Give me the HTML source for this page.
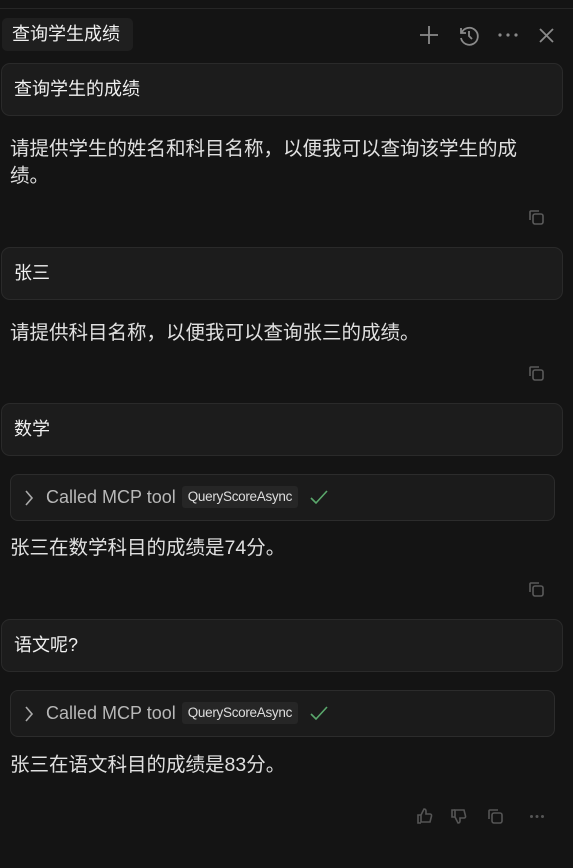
<!DOCTYPE html>
<html><head><meta charset="utf-8"><style>
body{margin:0;width:573px;height:868px;background:#141414;font-family:"Liberation Sans","Noto Sans CJK SC",sans-serif;color:#e6e6e6;position:relative;overflow:hidden}
.a{position:absolute}
.top{left:0;top:8px;width:573px;height:1px;background:#262626}
.tab{left:2px;top:18px;width:131px;height:33px;background:#1f1f1f;border-radius:5px;font-size:18px;line-height:33px;padding-left:10px;box-sizing:border-box;color:#f0f0f0;white-space:nowrap}
.ub{left:1px;width:562px;height:53px;background:#1c1c1c;border:1px solid #2a2a2a;border-radius:9px;box-sizing:border-box;font-size:18px;line-height:51px;padding-left:12px;color:#f0f0f0}
.t{left:10px;font-size:19.5px;line-height:27px;color:#e0e0e0;white-space:nowrap}
.tool{left:10px;width:545px;height:47px;background:#1b1b1b;border:1px solid #2c2c2c;border-radius:8px;box-sizing:border-box;font-size:18px;color:#b8b8b8;line-height:45px;padding-left:35px;white-space:nowrap}
.tool .code{display:inline-block;background:#262626;color:#ddd;font-size:13.5px;letter-spacing:-0.3px;line-height:22px;padding:0 6px;border-radius:3px;vertical-align:middle;margin-left:6px;margin-top:-3px}
svg{position:absolute}
</style></head><body>
<div class="a top"></div>
<div class="a tab">查询学生成绩</div>
<svg style="left:418px;top:24px" width="22" height="22" viewBox="0 0 22 22"><path d="M11 2v18M2 11h18" stroke="#8a8a8a" stroke-width="1.8"/></svg>
<svg style="left:457px;top:24px" width="24" height="24" viewBox="0 0 24 24" fill="none" stroke="#8a8a8a" stroke-width="1.8"><path d="M4 4v5h5"/><path d="M4.5 9A8.5 8.5 0 1 1 4 14"/><path d="M12 7v5l3 3"/></svg>
<svg style="left:497px;top:32px" width="22" height="6"><circle cx="3" cy="3" r="1.6" fill="#8a8a8a"/><circle cx="11" cy="3" r="1.6" fill="#8a8a8a"/><circle cx="19" cy="3" r="1.6" fill="#8a8a8a"/></svg>
<svg style="left:539px;top:28px" width="15" height="15"><path d="M1 1l13 13M14 1L1 14" stroke="#8a8a8a" stroke-width="1.8"/></svg>

<div class="a ub" style="top:63px">查询学生的成绩</div>
<div class="a t" style="top:136px">请提供学生的姓名和科目名称，以便我可以查询该学生的成<br>绩。</div>
<svg style="left:528px;top:209px" width="17" height="17" fill="none" stroke="#5a5a5a" stroke-width="1.6"><rect x="5" y="5" width="10" height="10" rx="2"/><path d="M2 11V3a1 1 0 0 1 1-1h8"/></svg>

<div class="a ub" style="top:247px">张三</div>
<div class="a t" style="top:320px">请提供科目名称，以便我可以查询张三的成绩。</div>
<svg style="left:528px;top:365px" width="17" height="17" fill="none" stroke="#5a5a5a" stroke-width="1.6"><rect x="5" y="5" width="10" height="10" rx="2"/><path d="M2 11V3a1 1 0 0 1 1-1h8"/></svg>

<div class="a ub" style="top:403px">数学</div>
<div class="a tool" style="top:474px">Called MCP tool<span class="code">QueryScoreAsync</span></div>
<svg style="left:24px;top:490px" width="10" height="16" fill="none" stroke="#aaa" stroke-width="1.6"><path d="M2 1l6 7-6 7"/></svg>
<svg style="left:310px;top:489px" width="18" height="16" fill="none" stroke="#5aa86c" stroke-width="1.6"><path d="M1 9l5 5L17 2"/></svg>
<div class="a t" style="top:535px">张三在数学科目的成绩是74分。</div>
<svg style="left:528px;top:581px" width="17" height="17" fill="none" stroke="#5a5a5a" stroke-width="1.6"><rect x="5" y="5" width="10" height="10" rx="2"/><path d="M2 11V3a1 1 0 0 1 1-1h8"/></svg>

<div class="a ub" style="top:619px">语文呢?</div>
<div class="a tool" style="top:690px">Called MCP tool<span class="code">QueryScoreAsync</span></div>
<svg style="left:24px;top:706px" width="10" height="16" fill="none" stroke="#aaa" stroke-width="1.6"><path d="M2 1l6 7-6 7"/></svg>
<svg style="left:310px;top:705px" width="18" height="16" fill="none" stroke="#5aa86c" stroke-width="1.6"><path d="M1 9l5 5L17 2"/></svg>
<div class="a t" style="top:752px">张三在语文科目的成绩是83分。</div>

<svg style="left:415px;top:807px" width="18" height="18" fill="none" stroke="#555" stroke-width="1.6"><path d="M6 8l3-6c1.5 0 2 1 2 2v3h4a1.5 1.5 0 0 1 1.5 2l-1.5 6H6z"/><path d="M6 8H3v8h3"/></svg>
<svg style="left:449px;top:807px" width="18" height="18" fill="none" stroke="#555" stroke-width="1.6"><path d="M6 10l3 6c1.5 0 2-1 2-2v-3h4a1.5 1.5 0 0 0 1.5-2L15 3H6z"/><path d="M6 10H3V3h3"/></svg>
<svg style="left:487px;top:808px" width="17" height="17" fill="none" stroke="#555" stroke-width="1.6"><rect x="5" y="5" width="10" height="10" rx="2"/><path d="M2 11V3a1 1 0 0 1 1-1h8"/></svg>
<svg style="left:529px;top:814px" width="16" height="5"><circle cx="2.5" cy="2.5" r="1.5" fill="#555"/><circle cx="8" cy="2.5" r="1.5" fill="#555"/><circle cx="13.5" cy="2.5" r="1.5" fill="#555"/></svg>
</body></html>
